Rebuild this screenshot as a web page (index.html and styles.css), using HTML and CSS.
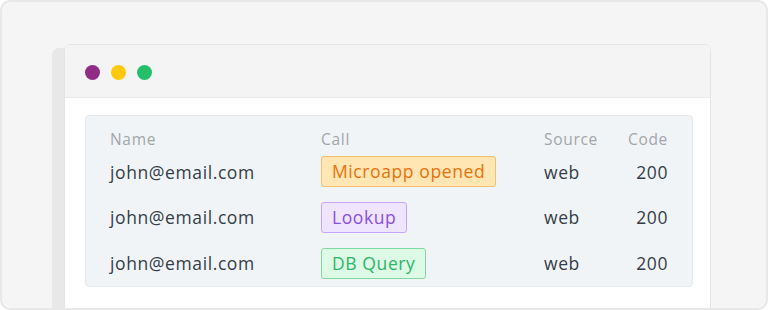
FILE: index.html
```html
<!DOCTYPE html>
<html lang="en">
  <head>
    <meta charset="UTF-8" />
    <meta name="viewport" content="width=device-width, initial-scale=1.0" />
    <title>API call log</title>
    <link rel="stylesheet" href="styles.css">
  </head>
  <body>
    <div class="frame">
      <div class="window">
        <div class="titlebar">
          <span class="dot dot-purple"></span>
          <span class="dot dot-yellow"></span>
          <span class="dot dot-green"></span>
        </div>
        <div class="window-body">
          <div class="log-table">
            <div class="log-head">Name</div>
            <div class="log-head">Call</div>
            <div class="log-head">Source</div>
            <div class="log-head code">Code</div>

            <div class="log-cell">john@email.com</div>
            <div class="log-cell"><span class="badge badge-orange">Microapp opened</span></div>
            <div class="log-cell">web</div>
            <div class="log-cell code">200</div>

            <div class="log-cell">john@email.com</div>
            <div class="log-cell"><span class="badge badge-purple">Lookup</span></div>
            <div class="log-cell">web</div>
            <div class="log-cell code">200</div>

            <div class="log-cell">john@email.com</div>
            <div class="log-cell"><span class="badge badge-green">DB Query</span></div>
            <div class="log-cell">web</div>
            <div class="log-cell code">200</div>
          </div>
        </div>
      </div>
    </div>
  </body>
</html>
```

FILE: styles.css
```css
/* Framed browser-window mockup with a small log table */
body {
  margin: 0;
  font-family: "Open Sans", "Noto Sans", sans-serif;
  background-color: #ffffff;
}
.frame {
  box-sizing: border-box;
  height: 310px;
  border: 2px solid #e8e8e8;
  border-radius: 10px;
  background-color: #f5f5f5;
  padding: 42px 0 0 62px;
  overflow: hidden;
}
.window {
  width: 645px;
  border: 1px solid #e4e4e4;
  border-radius: 7px 7px 0 0;
  background-color: #ffffff;
  box-shadow: -12px 4px 0 0 #e8e8e8;
  height: 300px;
}
.titlebar {
  display: flex;
  align-items: center;
  gap: 11px;
  box-sizing: border-box;
  height: 53px;
  padding: 2px 0 0 20px;
  background-color: #f4f4f4;
  border-bottom: 1px solid #ebebeb;
  border-radius: 7px 7px 0 0;
}
.dot {
  width: 15px;
  height: 15px;
  border-radius: 50%;
}
.dot-purple {
  background-color: #8e2c86;
}
.dot-yellow {
  background-color: #ffc80a;
}
.dot-green {
  background-color: #25bf69;
}
.window-body {
  padding: 17px 17px 0 20px;
}
.log-table {
  display: grid;
  grid-template-columns: 211px 223px 1fr auto;
  grid-template-rows: 33px 45px 46px 46px;
  padding: 0 24px 0 24px;
  background-color: #f1f4f6;
  border: 1px solid #e5e9ec;
  border-radius: 4px;
}
.log-head {
  padding-top: 13px;
  line-height: 20px;
  font-size: 15.5px;
  color: #a2a6aa;
  letter-spacing: 0.7px;
}
.log-cell {
  display: flex;
  align-items: center;
  font-size: 17.5px;
  color: #343e48;
  letter-spacing: 0.6px;
}
.code {
  justify-content: flex-end;
  text-align: right;
}
.badge {
  display: inline-block;
  box-sizing: border-box;
  height: 31px;
  line-height: 29px;
  padding: 0 10px;
  border: 1px solid;
  border-radius: 3px;
}
.badge-orange {
  background-color: #ffe6b3;
  border-color: #f4c06c;
  color: #e9720c;
}
.badge-purple {
  background-color: #efe5ff;
  border-color: #c5a6f6;
  color: #8b4fe2;
}
.badge-green {
  background-color: #dcfae6;
  border-color: #80d9a1;
  color: #2fb565;
}
```
